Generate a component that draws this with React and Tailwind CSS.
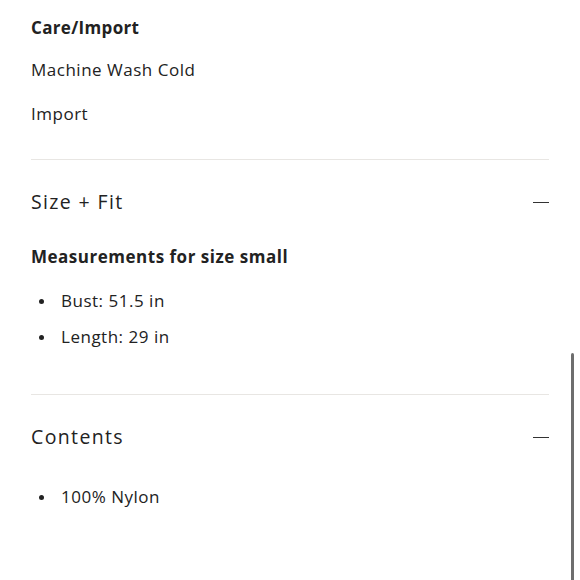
// Product details accordion — care, size + fit, contents

const FONT = { fontFamily: '"Open Sans", Lato, sans-serif' };

function Minus() {
  return <span className="block w-[16px] h-px bg-[#333]" aria-hidden="true" />;
}

function Bullet({ children }) {
  return (
    <li className="flex items-center h-6 text-[17px] tracking-[0.03em] text-[#222]">
      <span className="w-[5px] h-[5px] rounded-full bg-[#222] ml-[8px] mr-[17px]" />
      {children}
    </li>
  );
}

function SectionHeader({ title }) {
  return (
    <div className="flex items-center justify-between h-7">
      <span className="text-[19.5px] tracking-[0.07em] text-[#222]">{title}</span>
      <Minus />
    </div>
  );
}

export default function App() {
  return (
    <div className="relative w-[580px] h-[580px] overflow-hidden bg-white" style={FONT}>
      <div className="px-[31px] pt-4">
        {/* ── Care/Import ───────────────────────────── */}
        <p className="h-6 leading-6 text-[17px] font-bold tracking-[0.02em] text-[#222]">Care/Import</p>
        <p className="mt-[18px] h-6 leading-6 text-[17px] tracking-[0.03em] text-[#222]">Machine Wash Cold</p>
        <p className="mt-5 h-6 leading-6 text-[17px] tracking-[0.03em] text-[#222]">Import</p>

        <div className="mt-[33px] h-px bg-[#e8e6e3]" />

        {/* ── Size + Fit ────────────────────────────── */}
        <div className="mt-[28px]">
          <SectionHeader title="Size + Fit" />
        </div>
        <p className="mt-[29px] h-6 leading-6 text-[17px] font-bold tracking-[0.03em] text-[#222]">
          Measurements for size small
        </p>
        <ul className="mt-5 flex flex-col gap-3">
          <Bullet>Bust: 51.5 in</Bullet>
          <Bullet>Length: 29 in</Bullet>
        </ul>

        <div className="mt-[45px] h-px bg-[#e8e6e3]" />

        {/* ── Contents ──────────────────────────────── */}
        <div className="mt-[28px]">
          <SectionHeader title="Contents" />
        </div>
        <ul className="mt-[34px]">
          <Bullet>100% Nylon</Bullet>
        </ul>
      </div>

      {/* scrollbar thumb */}
      <div className="absolute right-[6px] top-[353px] w-[3px] h-[240px] rounded-full bg-[#6e6e6e]" />
    </div>
  );
}
